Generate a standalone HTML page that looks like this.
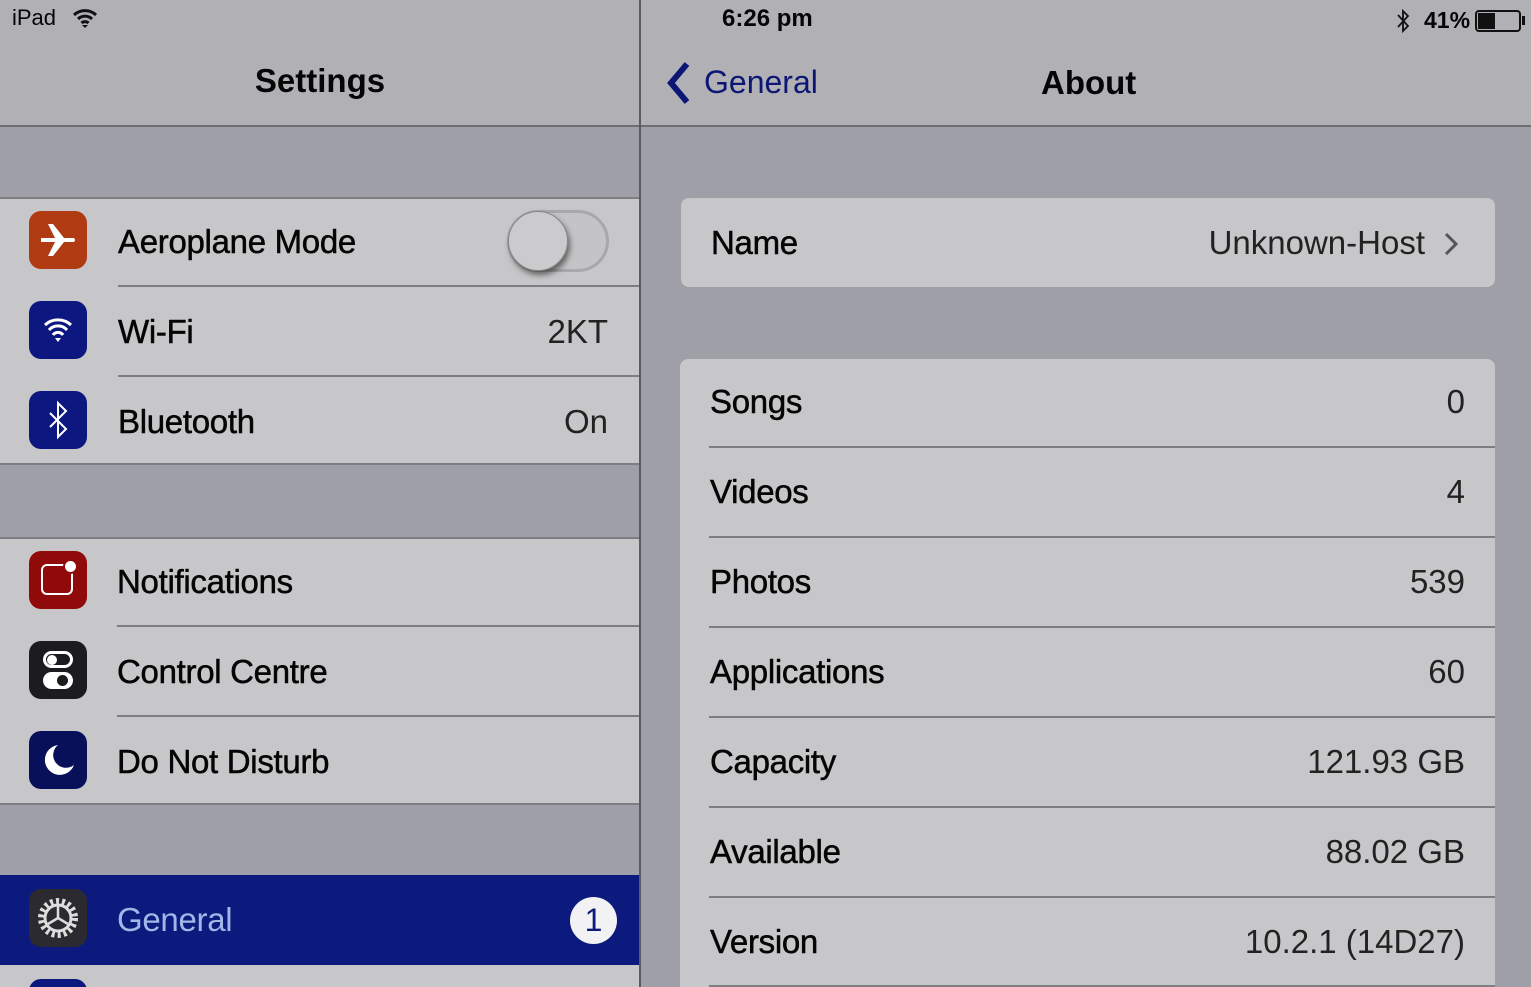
<!DOCTYPE html>
<html><head><meta charset="utf-8"><style>
*{margin:0;padding:0;box-sizing:border-box}
html{width:1531px;height:987px;overflow:hidden}
body{width:1531px;height:987px;overflow:hidden;background:#9f9fa8;font-family:"Liberation Sans",sans-serif;position:relative;color:#050505}
.hdr{position:absolute;top:0;height:127px;background:#b1b1b5;border-bottom:2px solid #6e6e72}
.abs{position:absolute}
.cell{position:absolute;background:#c7c7c9}
.row{position:absolute;left:0;right:0;height:90px}
.lbl{position:absolute;font-size:33px;top:50%;transform:translateY(-50%);letter-spacing:-0.3px;-webkit-text-stroke:0.5px #050505}
.val{position:absolute;font-size:33px;top:50%;transform:translateY(-50%);color:#222}
.sep{position:absolute;height:2px;background:#7e7e82}
.ic{position:absolute;left:29px;width:58px;height:58px;border-radius:12px;top:14px}
</style></head><body>
<div class="hdr" style="left:0;width:640px"></div>
<div class="hdr" style="left:641px;width:890px"></div>
<div class="abs" style="left:639px;top:0;width:2px;height:987px;background:#5a5a60"></div>
<div class="abs" style="left:12px;top:5px;font-size:22px">iPad</div>
<svg class="abs" style="left:72px;top:7px" width="26" height="22" viewBox="0 0 26 22"><path d="M2 8a16 16 0 0 1 22 0M6 12a10 10 0 0 1 14 0M9.5 16a5 5 0 0 1 7 0" stroke="#111" stroke-width="3" fill="none"/><path d="M10 18l3 3 3-3z" fill="#111"/></svg>
<div class="abs" style="left:722px;top:5px;font-size:24px;font-weight:bold">6:26 pm</div>
<svg class="abs" style="left:1395px;top:8px" width="16" height="26" viewBox="0 0 16 26"><path d="M3 7l10 11-5 5V3l5 5L3 19" stroke="#111" stroke-width="1.8" fill="none"/></svg>
<div class="abs" style="left:1424px;top:7px;font-size:23px;font-weight:bold">41%</div>
<div class="abs" style="left:1475px;top:10px;width:46px;height:22px;border:2px solid #111;border-radius:4px"><div style="width:17px;height:16px;margin:1px;background:#111"></div></div>
<div class="abs" style="left:1522px;top:16px;width:3px;height:9px;background:#111"></div>
<div class="abs" style="left:0;width:640px;top:62px;text-align:center;font-size:33px;font-weight:bold">Settings</div>
<svg class="abs" style="left:663px;top:60px" width="30" height="46" viewBox="0 0 30 46"><path d="M24 4L8 23l16 19" stroke="#0b1675" stroke-width="6" fill="none"/></svg>
<div class="abs" style="left:704px;top:64px;font-size:32px;color:#0b1675">General</div>
<div class="abs" style="left:1041px;top:64px;font-size:33px;font-weight:bold">About</div>

<div class="cell" style="left:0;width:639px;top:197px;height:268px;border-top:2px solid #7e7e82;border-bottom:2px solid #7e7e82">
 <div class="row" style="top:-2px"><div class="ic" style="background:#b03a12"><svg width="58" height="58" viewBox="0 0 58 58"><path d="M12 27h14l-7-14h5l11 14h9a2 2 0 0 1 0 4h-9L24 45h-5l7-14H12z" fill="#fff"/></svg></div><div class="lbl" style="left:118px">Aeroplane Mode</div>
 <div class="abs" style="left:507px;top:13px;width:102px;height:62px;border-radius:31px;border:3px solid #a8a8aa;background:#c4c4c6"></div>
 <div class="abs" style="left:508px;top:14px;width:60px;height:60px;border-radius:50%;background:#cbcbcd;box-shadow:2px 4px 6px rgba(0,0,0,.5);border:1px solid #888"></div></div>
 <div class="sep" style="left:118px;right:0;top:86px"></div>
 <div class="row" style="top:88px"><div class="ic" style="background:#0c1880"><svg width="58" height="58" viewBox="0 0 58 58"><path d="M16 24a19 19 0 0 1 26 0M20 29a12 12 0 0 1 18 0M24 34a6 6 0 0 1 10 0" stroke="#fff" stroke-width="3" fill="none"/><path d="M26 37l3 4 3-4z" fill="#fff"/></svg></div><div class="lbl" style="left:118px">Wi-Fi</div><div class="val" style="right:31px">2KT</div></div>
 <div class="sep" style="left:118px;right:0;top:176px"></div>
 <div class="row" style="top:178px"><div class="ic" style="background:#0c1880"><svg width="58" height="58" viewBox="0 0 58 58"><path d="M21 22l16 16-8 8V12l8 8-16 16" stroke="#fff" stroke-width="2" fill="none"/></svg></div><div class="lbl" style="left:118px">Bluetooth</div><div class="val" style="right:31px">On</div></div>
</div>

<div class="cell" style="left:0;width:639px;top:537px;height:268px;border-top:2px solid #7e7e82;border-bottom:2px solid #7e7e82">
 <div class="row" style="top:-2px"><div class="ic" style="background:#900a0a"><div class="abs" style="left:12px;top:13px;width:32px;height:31px;border:2px solid #fff;border-radius:6px"></div><div class="abs" style="left:34px;top:8px;width:15px;height:15px;border-radius:50%;background:#fff;border:2px solid #900a0a"></div></div><div class="lbl" style="left:117px">Notifications</div></div>
 <div class="sep" style="left:117px;right:0;top:86px"></div>
 <div class="row" style="top:88px"><div class="ic" style="background:#1c1c20"><div class="abs" style="left:14px;top:10px;width:30px;height:17px;border:3px solid #fff;border-radius:9px"></div><div class="abs" style="left:18px;top:14px;width:10px;height:10px;border-radius:50%;background:#fff"></div><div class="abs" style="left:14px;top:31px;width:30px;height:17px;border-radius:9px;background:#fff"></div><div class="abs" style="left:28px;top:34px;width:11px;height:11px;border-radius:50%;background:#1c1c20"></div></div><div class="lbl" style="left:117px">Control Centre</div></div>
 <div class="sep" style="left:117px;right:0;top:176px"></div>
 <div class="row" style="top:178px"><div class="ic" style="background:#08105a"><svg width="58" height="58" viewBox="0 0 58 58"><path d="M29 14a15 15 0 1 0 16 20a12 12 0 0 1-16-20z" fill="#fff"/></svg></div><div class="lbl" style="left:117px">Do Not Disturb</div></div>
</div>

<div class="abs" style="left:0;width:639px;top:875px;height:90px;background:#0b1a7c">
 <div class="ic" style="background:#2a2a30"><svg width="58" height="58" viewBox="0 0 58 58"><circle cx="29" cy="29" r="17" stroke="#ddd" stroke-width="6" stroke-dasharray="3 3" fill="none"/><circle cx="29" cy="29" r="13" stroke="#ddd" stroke-width="3" fill="none"/><path d="M29 29V17M29 29l10 6M29 29l-10 6" stroke="#ddd" stroke-width="2.5"/></svg></div>
 <div class="lbl" style="left:117px;color:#9fb8e8;-webkit-text-stroke:0"><span>General</span></div>
 <div class="abs" style="left:570px;top:22px;width:47px;height:47px;border-radius:50%;background:#f2f2f4;color:#0b1a7c;font-size:32px;text-align:center;line-height:47px">1</div>
</div>
<div class="cell" style="left:0;width:639px;top:965px;height:22px;overflow:hidden"><div class="ic" style="background:#0c1880;top:14px"></div></div>

<div class="cell" style="left:681px;width:814px;top:198px;height:89px;border-radius:8px">
 <div class="lbl" style="left:30px">Name</div><div class="val" style="right:70px">Unknown-Host</div>
 <svg class="abs" style="right:36px;top:33px" width="16" height="26" viewBox="0 0 16 26"><path d="M3 3l10 10L3 23" stroke="#555" stroke-width="3" fill="none"/></svg>
</div>
<div class="cell" style="left:680px;width:815px;top:359px;height:628px;border-radius:8px 8px 0 0;overflow:hidden">
 <div class="row" style="top:-2px"><div class="lbl" style="left:30px">Songs</div><div class="val" style="right:30px">0</div></div>
 <div class="sep" style="left:29px;right:0;top:87px"></div>
 <div class="row" style="top:88px"><div class="lbl" style="left:30px">Videos</div><div class="val" style="right:30px">4</div></div>
 <div class="sep" style="left:29px;right:0;top:177px"></div>
 <div class="row" style="top:178px"><div class="lbl" style="left:30px">Photos</div><div class="val" style="right:30px">539</div></div>
 <div class="sep" style="left:29px;right:0;top:267px"></div>
 <div class="row" style="top:268px"><div class="lbl" style="left:30px">Applications</div><div class="val" style="right:30px">60</div></div>
 <div class="sep" style="left:29px;right:0;top:357px"></div>
 <div class="row" style="top:358px"><div class="lbl" style="left:30px">Capacity</div><div class="val" style="right:30px">121.93 GB</div></div>
 <div class="sep" style="left:29px;right:0;top:447px"></div>
 <div class="row" style="top:448px"><div class="lbl" style="left:30px">Available</div><div class="val" style="right:30px">88.02 GB</div></div>
 <div class="sep" style="left:29px;right:0;top:537px"></div>
 <div class="row" style="top:538px"><div class="lbl" style="left:30px">Version</div><div class="val" style="right:30px">10.2.1 (14D27)</div></div>
 <div class="sep" style="left:29px;right:0;top:626px"></div>
</div>
</body></html>
